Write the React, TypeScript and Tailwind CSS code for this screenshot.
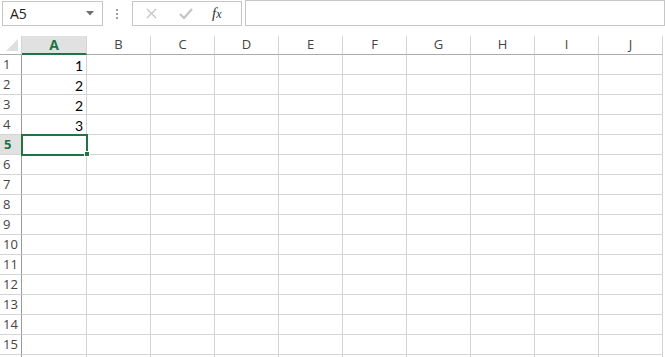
const cols = ["A", "B", "C", "D", "E", "F", "G", "H", "I", "J"];
const rows = Array.from({ length: 16 }, (_, i) => i + 1);
const values: Record<number, string> = { 1: "1", 2: "2", 3: "2", 4: "3" };

function FormulaBar() {
    return (
        <div className="flex h-[26px] items-start">
            <div className="ml-[2px] mt-[1px] flex h-[25px] w-[101px] items-center justify-between border border-[#c6c6c6] bg-white pl-[7px] pr-[8px]">
                <span className="text-[14px] text-[#222]">A5</span>
                <svg width="8" height="5" viewBox="0 0 8 5">
                    <path d="M0 0h8L4 4.5z" fill="#6f6f6f" />
                </svg>
            </div>
            <div className="ml-[13px] mt-[9px] flex flex-col gap-[2px]">
                <span className="block h-[2px] w-[2px] bg-[#a0a0a0]" />
                <span className="block h-[2px] w-[2px] bg-[#a0a0a0]" />
                <span className="block h-[2px] w-[2px] bg-[#a0a0a0]" />
            </div>
            <div className="ml-[14px] mt-[1px] flex h-[25px] w-[110px] items-center border border-[#c6c6c6] bg-white">
                <svg className="ml-[13px]" width="11" height="11" viewBox="0 0 11 11">
                    <path d="M1 1l9 9M10 1l-9 9" stroke="#c4c4c4" strokeWidth="1.3" />
                </svg>
                <svg className="ml-[22px]" width="14" height="11" viewBox="0 0 14 11">
                    <path d="M1 6l4 4L13 1" stroke="#c4c4c4" strokeWidth="2.2" fill="none" />
                </svg>
                <span className="ml-[19px] font-['Liberation_Serif',serif] text-[15px] italic text-[#333]">
                    f<span className="text-[12px]">x</span>
                </span>
            </div>
            <div className="ml-[3px] mt-0 h-[26px] flex-1 border border-[#c6c6c6] bg-white" />
        </div>
    );
}

export default function App() {
    return (
        <div className="h-[357px] w-[665px] overflow-hidden bg-white font-['Open_Sans',sans-serif]">
            <FormulaBar />
            <div className="relative mt-[10px]">
                <div className="grid grid-cols-[22px_65px_repeat(9,64px)]">
                    {/* header row */}
                    <div className="relative h-[19px] border-b border-r border-[#ababab] border-r-[#d4d4d4]">
                        <svg className="absolute bottom-[3px] right-[3px]" width="12" height="12" viewBox="0 0 12 12">
                            <path d="M12 0V12H0z" fill="#dfdfdf" />
                        </svg>
                    </div>
                    {cols.map((c) =>
                        c === "A" ? (
                            <div
                                key={c}
                                className="flex h-[19px] items-center justify-center border-b-2 border-r border-[#217346] border-r-[#d4d4d4] bg-[#e1e1e1] text-[14px] font-bold text-[#217346]"
                            >
                                {c}
                            </div>
                        ) : (
                            <div
                                key={c}
                                className="flex h-[19px] items-center justify-center border-b border-r border-[#ababab] border-r-[#d4d4d4] text-[13px] text-[#444]"
                            >
                                {c}
                            </div>
                        )
                    )}
                    {rows.map((r) => (
                        <RowCells key={r} r={r} />
                    ))}
                </div>
                {/* selected cell A5 */}
                <div className="pointer-events-none absolute left-[21px] top-[98px] h-[22px] w-[67px] border-2 border-[#217346]" />
                <div className="pointer-events-none absolute left-[84px] top-[115px] h-[6px] w-[6px] border border-white bg-[#217346]" />
            </div>
        </div>
    );
}

function RowCells({ r }: { r: number }) {
    const sel = r === 5;
    return (
        <>
            <div
                className={
                    sel
                        ? "flex h-[20px] items-center border-b border-r border-[#d4d4d4] border-r-[#9b9b9b] bg-[#e1e1e1] pl-[4px] pt-[1px] text-[13px] font-bold text-[#217346]"
                        : "flex h-[20px] items-center border-b border-r border-[#d4d4d4] border-r-[#9b9b9b] pl-[3px] pt-[1px] text-[13px] text-[#444]"
                }
            >
                {r <= 15 ? r : ""}
            </div>
            {cols.map((c) => (
                <div
                    key={c}
                    className="flex h-[20px] items-center justify-end border-b border-r border-[#d4d4d4] pr-[3px] pt-[1px] font-['Lato',sans-serif] text-[14px] text-black"
                >
                    {c === "A" ? values[r] ?? "" : ""}
                </div>
            ))}
        </>
    );
}
